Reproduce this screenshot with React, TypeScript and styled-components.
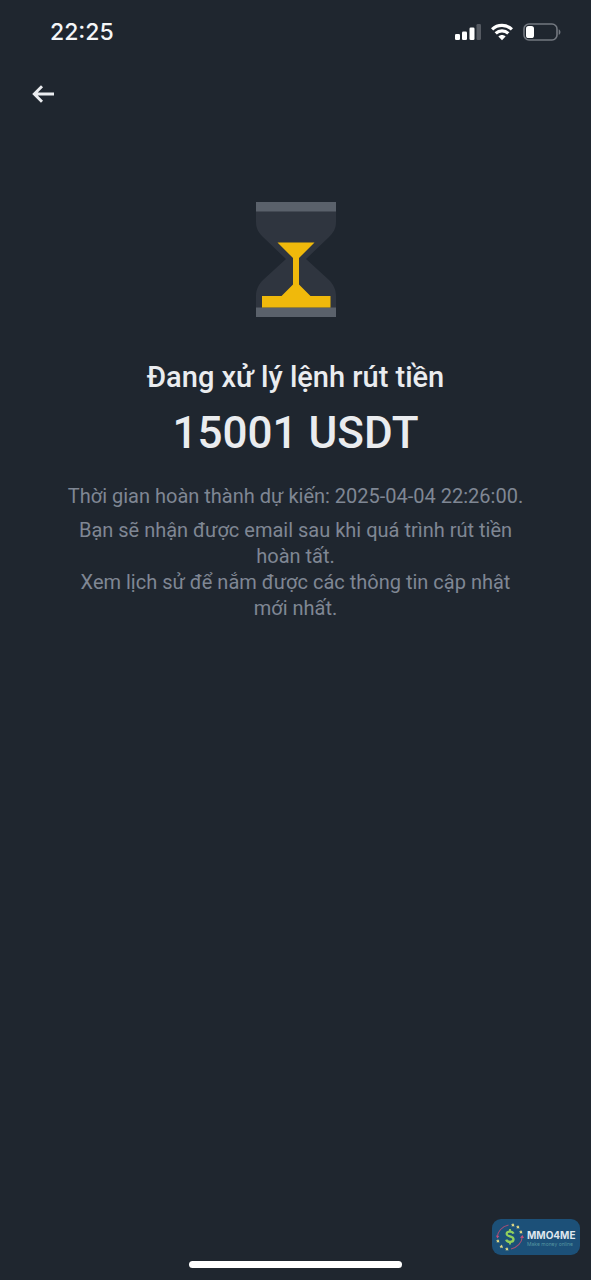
import React from "react";
import styled, { createGlobalStyle } from "styled-components";

const GlobalStyle = createGlobalStyle`
  * { box-sizing: border-box; }
  body {
    margin: 0;
    background: #1f262f;
    font-family: Roboto, "Noto Sans", sans-serif;
    -webkit-font-smoothing: antialiased;
  }
`;

const Screen = styled.div`
  position: relative;
  min-height: 100vh;
  display: flex;
  flex-direction: column;
  background: #1f262f;
  color: #eaecef;
`;

const StatusBar = styled.header`
  display: flex;
  align-items: center;
  justify-content: space-between;
  height: 64px;
  padding: 0 30px 0 50px;
`;

const Clock = styled.time`
  font-family: Inter, sans-serif;
  font-size: 23px;
  line-height: 28px;
  font-weight: 500;
  color: #f5f6f8;
`;

const StatusIcons = styled.div`
  display: flex;
  align-items: center;
  gap: 10px;
`;

const NavBar = styled.nav`
  display: flex;
  padding: 14px 27px;
`;

const BackButton = styled.button`
  display: flex;
  align-items: center;
  justify-content: center;
  width: 32px;
  height: 32px;
  padding: 0;
  border: 0;
  background: none;
  color: #eaecef;
  cursor: pointer;
`;

const Content = styled.main`
  flex: 1;
  display: flex;
  flex-direction: column;
  align-items: center;
  padding: 78px 60px 0;
  text-align: center;
`;

const Title = styled.h1`
  margin: 42px 0 0;
  font-size: 29px;
  line-height: 36px;
  font-weight: 500;
`;

const Amount = styled.p`
  margin: 10px 0 0;
  font-size: 44px;
  line-height: 56px;
  font-weight: 500;
`;

const Note = styled.p<{ $gap?: number }>`
  max-width: 460px;
  margin: ${({ $gap = 0 }) => $gap}px 0 0;
  font-size: 20px;
  line-height: 26px;
  color: #7f8794;
`;

const HomeArea = styled.footer`
  display: flex;
  justify-content: center;
  padding: 0 0 12px;
`;

const HomeIndicator = styled.div`
  width: 36%;
  height: 7px;
  border-radius: 4px;
  background: #ffffff;
`;

const Watermark = styled.aside`
  position: absolute;
  right: 11px;
  bottom: 25px;
  display: flex;
  align-items: center;
  gap: 3px;
  width: 88px;
  height: 36px;
  padding: 0 4px;
  border-radius: 9px;
  background: #1c5078;

  svg {
    flex: none;
  }
`;

const Brand = styled.div`
  display: flex;
  flex-direction: column;
  padding-top: 2px;
  white-space: nowrap;
`;

const BrandName = styled.strong`
  font-family: Inter, sans-serif;
  font-size: 10px;
  line-height: 12px;
  font-weight: 700;
  color: #dfe7ee;
`;

const BrandTagline = styled.span`
  font-family: Inter, sans-serif;
  font-size: 5px;
  line-height: 6px;
  color: #5596a0;
`;

const SignalIcon = () => (
  <svg width="26" height="18" viewBox="0 0 26 18" aria-hidden="true">
    <rect x="0" y="11" width="5" height="6" rx="1.3" fill="#fff" />
    <rect x="7" y="8.5" width="5" height="8.5" rx="1.3" fill="#fff" />
    <rect x="14.5" y="4.5" width="5" height="12.5" rx="1.3" fill="#fff" />
    <rect x="21.5" y="1" width="4.5" height="16" rx="1.3" fill="#555a62" />
  </svg>
);

const WifiIcon = () => (
  <svg width="22" height="18" viewBox="0 0 22 18" aria-hidden="true">
    <g fill="none" stroke="#fff" strokeWidth="3.2">
      <path d="M1.1 6.3C6.7 1.1 15.3 1.1 20.9 6.3" />
      <path d="M4.7 10.4C8.3 7 13.7 7 17.3 10.4" />
    </g>
    <path d="M7.4 13.6C9.5 11.6 12.5 11.6 14.6 13.6L11 17.3Z" fill="#fff" />
  </svg>
);

const BatteryIcon = () => (
  <svg width="38" height="18" viewBox="0 0 38 18" aria-hidden="true">
    <rect x="1" y="1" width="33" height="16" rx="5" fill="none" stroke="#737880" strokeWidth="1.6" />
    <rect x="3" y="3" width="8" height="12" rx="2.6" fill="#fff" />
    <path d="M35.7 6.2C38 7.1 38 10.9 35.7 11.8Z" fill="#737880" />
  </svg>
);

const ArrowLeftIcon = () => (
  <svg width="24" height="20" viewBox="0 0 24 20" fill="none" stroke="currentColor" strokeWidth="2.9" aria-hidden="true">
    <path d="M3 10H23M11 2.3L3.3 10L11 17.7" />
  </svg>
);

const Hourglass = () => (
  <svg width="80" height="115" viewBox="0 0 80 115" aria-hidden="true">
    <path
      d="M0 9H80V20C80 27 77 31 73 35L50 57L73 78C77 82 80 87 80 94V106H0V94C0 87 3 82 7 78L30 57L7 35C3 31 0 27 0 20Z"
      fill="#2f353f"
    />
    <rect width="80" height="9.5" fill="#5a616b" />
    <rect y="105.5" width="80" height="9.5" fill="#5a616b" />
    <path
      d="M21.5 40.5H58.5L43 56V82.5L54.5 94H74.5V105.5H6V94H25.5L37 82.5V56Z"
      fill="#f0b90b"
    />
  </svg>
);

const stars = [
  [17, 3], [22, 5], [25, 10], [2, 19], [5.5, 24.5], [11, 27],
];

const CoinLogo = () => (
  <svg width="28" height="30" viewBox="0 0 28 30" aria-hidden="true">
    <g fill="none" stroke="#a64e74" strokeWidth="1.1">
      <path d="M12.5 3C6 4.5 1.5 9.5 1.3 15" />
      <path d="M15 27C21.5 25.5 26 20.5 26.3 14.5" />
    </g>
    <path d="M0 13.5L1.3 16.5L3.3 14ZM24 15.8L26.4 13L28 16Z" fill="#c4507a" />
    {stars.map(([x, y]) => (
      <path
        key={`${x}-${y}`}
        transform={`translate(${x} ${y})`}
        d="M0-2L.6-.7L2-.6L1-.4L1.3 1.7L0 1L-1.3 1.7L-1 .4L-2-.6L-.6-.7Z"
        fill="#e3da85"
      />
    ))}
    <g fill="none" stroke="#91cf5c" strokeWidth="2.3">
      <path d="M17.5 11.7C16.5 8.8 10.5 8.8 10.7 12C10.9 15.2 17.6 13.7 17.5 17.4C17.4 20.7 11 20.6 10.2 17.6" />
      <path d="M14 7V10M14 19.5V22.5" strokeWidth="1.8" />
    </g>
  </svg>
);

export default function App() {
  return (
    <Screen>
      <GlobalStyle />
      <StatusBar>
        <Clock>22:25</Clock>
        <StatusIcons>
          <SignalIcon />
          <WifiIcon />
          <BatteryIcon />
        </StatusIcons>
      </StatusBar>
      <NavBar>
        <BackButton type="button" aria-label="Quay lại">
          <ArrowLeftIcon />
        </BackButton>
      </NavBar>
      <Content>
        <Hourglass />
        <Title>Đang xử lý lệnh rút tiền</Title>
        <Amount>15001 USDT</Amount>
        <Note $gap={22}>Thời gian hoàn thành dự kiến: 2025-04-04 22:26:00.</Note>
        <Note $gap={8}>
          Bạn sẽ nhận được email sau khi quá trình rút tiền hoàn tất.
          <br />
          Xem lịch sử để nắm được các thông tin cập nhật mới nhất.
        </Note>
      </Content>
      <HomeArea>
        <HomeIndicator />
      </HomeArea>
      <Watermark>
        <CoinLogo />
        <Brand>
          <BrandName>MMO4ME</BrandName>
          <BrandTagline>Make money online</BrandTagline>
        </Brand>
      </Watermark>
    </Screen>
  );
}
